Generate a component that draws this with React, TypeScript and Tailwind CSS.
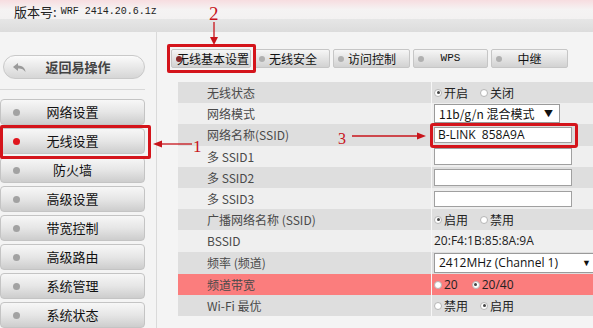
import React from "react";

const cjk = { fontFamily: '"Noto Sans CJK SC", "Noto Sans", sans-serif' };

function Radio({ on }: { on?: boolean }) {
  return (
    <span className="inline-flex w-[8px] h-[8px] rounded-full border border-[#b5b5b5] bg-white items-center justify-center mr-[2px]">
      {on && <span className="w-[3px] h-[3px] rounded-full bg-[#444]" />}
    </span>
  );
}

const menu = ["网络设置", "无线设置", "防火墙", "高级设置", "带宽控制", "高级路由", "系统管理", "系统状态"];
const tabs: [string, number][] = [
  ["无线基本设置", 80],
  ["无线安全", 76],
  ["访问控制", 77],
  ["WPS", 75],
  ["中继", 77],
];

type Row = { label: string; h: string; bg: string; value: React.ReactNode };

export default function App() {
  const rows: Row[] = [
    {
      label: "无线状态",
      h: "h-[21px]",
      bg: "bg-[#dedede]",
      value: (
        <div className="flex items-center">
          <Radio on />
          <span>开启</span>
          <span className="ml-[12px] flex items-center">
            <Radio />
            <span>关闭</span>
          </span>
        </div>
      ),
    },
    {
      label: "网络模式",
      h: "h-[21px]",
      bg: "bg-[#efefef]",
      value: (
        <div className="w-[126px] h-[19px] bg-white border border-[#9a9a9a] flex items-center pl-[4px] pr-[6px] justify-between text-[#111]">
          <span>11b/g/n 混合模式</span>
          <span className="text-[9px]">▼</span>
        </div>
      ),
    },
    {
      label: "网络名称(SSID)",
      h: "h-[22px]",
      bg: "bg-[#dedede]",
      value: (
        <div className="w-[138px] h-[16px] bg-white border border-[#a0a0a0] flex items-center pl-[3px] text-[#111]" style={{ fontFamily: '"Open Sans", "Noto Sans", sans-serif' }}>
          B-LINK&nbsp; 858A9A
        </div>
      ),
    },
    { label: "多 SSID1", h: "h-[21px]", bg: "bg-[#efefef]", value: <div className="w-[138px] h-[17px] bg-white border border-[#a0a0a0]" /> },
    { label: "多 SSID2", h: "h-[21px]", bg: "bg-[#dedede]", value: <div className="w-[138px] h-[17px] bg-white border border-[#a0a0a0]" /> },
    { label: "多 SSID3", h: "h-[21px]", bg: "bg-[#efefef]", value: <div className="w-[138px] h-[16px] bg-white border border-[#a0a0a0]" /> },
    {
      label: "广播网络名称 (SSID)",
      h: "h-[21px]",
      bg: "bg-[#dedede]",
      value: (
        <div className="flex items-center">
          <Radio on />
          <span>启用</span>
          <span className="ml-[12px] flex items-center">
            <Radio />
            <span>禁用</span>
          </span>
        </div>
      ),
    },
    { label: "BSSID", h: "h-[22px]", bg: "bg-[#efefef]", value: <span style={{ fontFamily: '"Open Sans", sans-serif' }}>20:F4:1B:85:8A:9A</span> },
    {
      label: "频率 (频道)",
      h: "h-[22px]",
      bg: "bg-[#dedede]",
      value: (
        <div className="w-[170px] h-[20px] bg-white border border-[#9a9a9a] flex items-center pl-[4px] text-[#111]" style={{ fontFamily: '"Open Sans", sans-serif' }}>
          <span className="w-[143px]">2412MHz (Channel 1)</span>
          <span className="text-[9px]">▼</span>
        </div>
      ),
    },
    {
      label: "频道带宽",
      h: "h-[21px]",
      bg: "bg-[#fb7d7d]",
      value: (
        <div className="flex items-center" style={{ fontFamily: '"Open Sans", sans-serif' }}>
          <Radio />
          <span>20</span>
          <span className="ml-[14px] flex items-center">
            <Radio on />
            <span>20/40</span>
          </span>
        </div>
      ),
    },
    {
      label: "Wi-Fi 最优",
      h: "h-[21px]",
      bg: "bg-[#dedede]",
      value: (
        <div className="flex items-center">
          <Radio />
          <span>禁用</span>
          <span className="ml-[12px] flex items-center">
            <Radio on />
            <span>启用</span>
          </span>
        </div>
      ),
    },
  ];

  return (
    <div className="w-[593px] h-[328px] overflow-hidden bg-[#f4f4f4] relative text-[12px]" style={cjk}>
      {/* header */}
      <div className="h-[19px] bg-gradient-to-b from-[#f7dde0] via-[#f5f3f3] to-[#f3f1f1] flex items-center pl-[14px] pt-[4px]">
        <span className="text-[13px] text-[#222]">版本号:</span>
        <span className="ml-[4px] text-[10px] text-[#222]" style={{ fontFamily: '"Liberation Mono", monospace' }}>
          WRF 2414.20.6.1z
        </span>
      </div>
      <div className="h-[13px] bg-gradient-to-b from-[#e6e6e6] to-[#dcdcdc]" />

      <div className="flex h-[296px]">
        {/* sidebar */}
        <div className="w-[157px] border-r border-[#dadada] flex flex-col shrink-0">
          <div className="mt-[23px] ml-[3px] w-[142px] h-[25px] rounded-full border border-[#c9c9c9] bg-gradient-to-b from-[#fbfbfb] to-[#d6d6d6] flex items-center relative">
            <svg className="absolute left-[9px] top-[7px]" width="13" height="10" viewBox="0 0 13 10">
              <path d="M5 0 L0 4 L5 8 L5 5.5 C8 5.2 10.5 6 12.5 9 C12 5 9.5 2.8 5 2.6 Z" fill="#9a9a9a" />
            </svg>
            <span className="w-full text-center text-[13px] font-semibold text-[#444] pl-[8px]">返回易操作</span>
          </div>
          <div className="mt-[10px] w-[145px] h-px bg-[#d8d8d8]" />
          <div className="mt-[9px] flex flex-col gap-[3px]">
            {menu.map((m, i) => (
              <div
                key={m}
                className="w-[145px] h-[26px] rounded-[4px] border border-[#c4c4c4] bg-gradient-to-b from-[#f7f7f7] via-[#e6e6e6] to-[#cdcdcd] flex items-center relative"
              >
                <span className={`absolute left-[12px] top-[9px] w-[7px] h-[7px] rounded-full ${i === 1 ? "bg-[#e0151d]" : "bg-[#a2a2a2]"}`} />
                <span className="w-full text-center text-[13px] text-[#111]">{m}</span>
              </div>
            ))}
          </div>
        </div>

        {/* content */}
        <div className="flex-1 flex flex-col">
          <div className="mt-[17px] ml-[14px] flex gap-[3px]">
            {tabs.map(([t, w], i) => (
              <div
                key={t}
                style={{ width: w }}
                className="h-[19px] shrink-0 rounded-[2px] border border-[#c6c6c6] bg-gradient-to-b from-[#f6f6f6] to-[#d2d2d2] flex items-center relative"
              >
                <span className={`absolute top-[6px] w-[6px] h-[6px] rounded-full ${i === 0 ? "left-[4px] bg-[#8a2a2a]" : "left-[4px] bg-[#b0b0b0]"}`} />
                {i === 0 ? (
                  <span className="pl-[5px] text-[#111]">{t}</span>
                ) : (
                  <span className={`w-full text-[#111] ${i >= 3 ? "text-center" : "pl-[14px]"}`} style={i === 3 ? { fontFamily: '"Liberation Mono", monospace', fontSize: 11 } : undefined}>
                    {t}
                  </span>
                )}
              </div>
            ))}
          </div>

          <div className="mt-[14px] ml-[21px] flex flex-col">
            {rows.map((r) => (
              <div key={r.label} className={`flex ${r.h} ${r.bg} items-center`}>
                <div className="w-[253px] pl-[29px] text-[#4a4a4a] shrink-0">{r.label}</div>
                <div className="h-full border-l border-[#f6f6f6] pl-[2px] flex items-center text-[#222] flex-1">{r.value}</div>
              </div>
            ))}
          </div>
        </div>
      </div>

      {/* annotations */}
      <div className="absolute left-[0px] top-[125px] w-[151px] h-[34px] border-[3px] border-[#d4141b] rounded-[2px]" />
      <div className="absolute left-[167px] top-[44px] w-[89px] h-[29px] border-[3px] border-[#d4141b] rounded-[2px]" />
      <div className="absolute left-[430px] top-[123px] w-[148px] h-[25px] border-[3px] border-[#d4141b] rounded-[3px]" />

      <svg className="absolute left-0 top-0" width="593" height="328" viewBox="0 0 593 328">
        <line x1="214" y1="22" x2="214" y2="38" stroke="#c8141b" strokeWidth="1.3" />
        <polygon points="210,37 218,37 214,45" fill="#c8141b" />
        <line x1="160" y1="144" x2="192" y2="144" stroke="#c8141b" strokeWidth="1.3" />
        <polygon points="153,144 162,140.5 162,147.5" fill="#c8141b" />
        <line x1="352" y1="136" x2="418" y2="136" stroke="#c8141b" strokeWidth="1.3" />
        <polygon points="426,136 417,132.5 417,139.5" fill="#c8141b" />
      </svg>
      <span className="absolute left-[209px] top-[4px] text-[19px] leading-none text-[#c8141b]" style={{ fontFamily: '"Liberation Serif", serif' }}>2</span>
      <span className="absolute left-[193px] top-[138px] text-[17px] leading-none text-[#c8141b]" style={{ fontFamily: '"Liberation Serif", serif' }}>1</span>
      <span className="absolute left-[338px] top-[131px] text-[16px] leading-none text-[#c8141b]" style={{ fontFamily: '"Liberation Serif", serif' }}>3</span>
    </div>
  );
}
